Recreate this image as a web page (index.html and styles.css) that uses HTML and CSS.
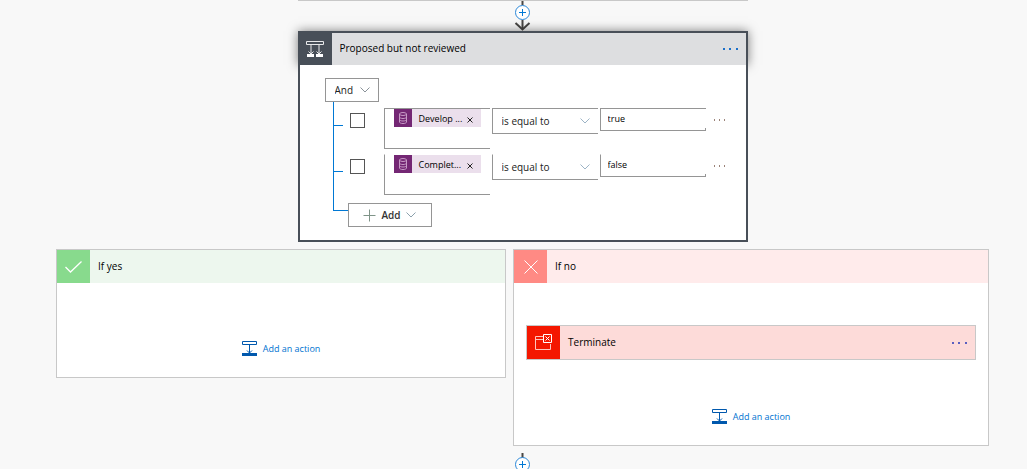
FILE: index.html
```html
<!DOCTYPE html>
<html lang="en">
<head>
  <meta charset="UTF-8" />
  <meta name="viewport" content="width=device-width, initial-scale=1.0"/>
  <title>Flow designer</title>
  <link rel="stylesheet" href="styles.css">
</head>
<body>
  <main class="flow">
    <div class="prev-step"></div>
    <svg class="connector" width="17" height="30" viewBox="0 0 17 30" fill="none">
      <path d="M8.5 0v4M8.5 19v9" stroke="#484644" stroke-width="2"/>
      <path d="M1.5 22l7 6.5 7-6.5" stroke="#484644" stroke-width="2"/>
      <circle cx="8.5" cy="11.5" r="7" fill="#fff" stroke="#2b88d8"/>
      <path d="M5 11.5h7M8.5 8v7" stroke="#0078d4"/>
    </svg>

    <section class="condition">
      <header class="condition-header">
        <span class="condition-icon">
          <svg width="18" height="18" viewBox="0 0 18 18" fill="none" stroke="#e8e9ea">
            <path d="M.5 1.5h17v3H.5zM5 5v9M13 5v9M2.500 11.500L5 14l2.500-2.500M10.500 11.500L13 14l2.500-2.500"/>
            <path d="M1 15.500h7M10 15.500h7" stroke="#fff" stroke-width="3"/>
          </svg>
        </span>
        <h2 class="title">Proposed but not reviewed</h2>
        <button class="menu" aria-label="Condition menu">
          <svg width="15" height="2" viewBox="0 0 15 2" fill="#1a6fc9"><path d="M0 0h2v2H0zM6 0h2v2H6zM13 0h2v2h-2z"/></svg>
        </button>
      </header>
      <div class="condition-body">
        <div class="dropdown group-op">
          <select aria-label="Group operator"><option>And</option><option>Or</option></select>
          <svg class="chevron" width="10" height="6" viewBox="0 0 10 6" fill="none" stroke="#8a9299"><path d="M.5.5L5 5 9.500.5"/></svg>
        </div>
        <div class="tree">
          <div class="row">
            <span class="tick"></span>
            <input type="checkbox" class="check" aria-label="Select first row">
            <div class="operand">
              <span class="token">
                <svg class="token-icon" width="18" height="18" viewBox="0 0 18 18" fill="none" stroke="#c79ac6"><ellipse cx="9" cy="5" rx="3.500" ry="1.500"/><path d="M5.500 5v8c0 2 7 2 7 0V5M5.500 8c0 2 7 2 7 0M5.500 10.500c0 2 7 2 7 0"/></svg>
                <span class="token-text">Develop ...</span>
                <button class="remove" aria-label="Remove Develop"><svg width="6" height="6" viewBox="0 0 6 6" stroke="#222"><path d="M.5.5l5 5M5.500.5l-5 5"/></svg></button>
              </span>
            </div>
            <div class="dropdown operator">
              <select aria-label="First comparison"><option>is equal to</option></select>
              <svg class="chevron" width="10" height="6" viewBox="0 0 10 6" fill="none" stroke="#9db4c6"><path d="M.5.5L5 5 9.500.5"/></svg>
            </div>
            <input class="value" type="text" value="true" aria-label="First value">
            <button class="menu row-menu" aria-label="First row menu">
              <svg width="12" height="2" viewBox="0 0 12 2" fill="#9b8278"><path d="M0 0h1v2H0zM5 0h1v2H5zM10 0h1v2h-1z"/></svg>
            </button>
          </div>
          <div class="row">
            <span class="tick"></span>
            <input type="checkbox" class="check" aria-label="Select second row">
            <div class="operand">
              <span class="token">
                <svg class="token-icon" width="18" height="18" viewBox="0 0 18 18" fill="none" stroke="#c79ac6"><ellipse cx="9" cy="5" rx="3.500" ry="1.500"/><path d="M5.500 5v8c0 2 7 2 7 0V5M5.500 8c0 2 7 2 7 0M5.500 10.500c0 2 7 2 7 0"/></svg>
                <span class="token-text">Complet...</span>
                <button class="remove" aria-label="Remove Complete"><svg width="6" height="6" viewBox="0 0 6 6" stroke="#222"><path d="M.5.5l5 5M5.500.5l-5 5"/></svg></button>
              </span>
            </div>
            <div class="dropdown operator">
              <select aria-label="Second comparison"><option>is equal to</option></select>
              <svg class="chevron" width="10" height="6" viewBox="0 0 10 6" fill="none" stroke="#9db4c6"><path d="M.5.5L5 5 9.500.5"/></svg>
            </div>
            <input class="value" type="text" value="false" aria-label="Second value">
            <button class="menu row-menu" aria-label="Second row menu">
              <svg width="12" height="2" viewBox="0 0 12 2" fill="#9b8278"><path d="M0 0h1v2H0zM5 0h1v2H5zM10 0h1v2h-1z"/></svg>
            </button>
          </div>
        </div>
        <div class="tree-end">
          <span class="elbow"></span>
          <button class="add">
            <svg width="13" height="13" viewBox="0 0 13 13" stroke="#7f9488"><path d="M.5 6.500h12M6.500.5v12"/></svg>
            Add
            <svg width="10" height="6" viewBox="0 0 10 6" fill="none" stroke="#8ba0ac"><path d="M.5.5L5 5 9.500.5"/></svg>
          </button>
        </div>
      </div>
    </section>

    <div class="branches">
      <section class="branch yes">
        <header class="branch-header">
          <span class="branch-icon">
            <svg width="17" height="12" viewBox="0 0 17 12" fill="none" stroke="#fff" stroke-width="1.300"><path d="M.5 6l5 5L16.500.5"/></svg>
          </span>
          <h2 class="title">If yes</h2>
        </header>
        <div class="branch-body">
          <button class="add-action">
            <svg width="15" height="15" viewBox="0 0 15 15" fill="none" stroke="#0058ad"><path d="M.5.5h14v3H.5zM7.500 4v8M5 9.500L7.500 12 10 9.500"/><path d="M0 13.500h15" stroke-width="3"/></svg>
            Add an action
          </button>
        </div>
      </section>

      <section class="branch no">
        <header class="branch-header">
          <span class="branch-icon">
            <svg width="14" height="14" viewBox="0 0 14 14" stroke="#fff"><path d="M.5.5l13 13M13.500.5l-13 13"/></svg>
          </span>
          <h2 class="title">If no</h2>
        </header>
        <div class="branch-body">
          <div class="action">
            <span class="action-icon">
              <svg width="18" height="17" viewBox="0 0 18 17" fill="none" stroke="#ffc4bc"><path d="M8 2.500H.5v13h15V10M.5 5.500H8"/><path d="M8.500.5h8v8h-8zM10.500 2.500l4 4M14.500 2.500l-4 4" stroke="#fff"/></svg>
            </span>
            <h3 class="title">Terminate</h3>
            <button class="menu" aria-label="Terminate menu">
              <svg width="15" height="2" viewBox="0 0 15 2" fill="#5a5fc0"><path d="M0 0h2v2H0zM6 0h2v2H6zM13 0h2v2h-2z"/></svg>
            </button>
          </div>
          <button class="add-action">
            <svg width="15" height="15" viewBox="0 0 15 15" fill="none" stroke="#0058ad"><path d="M.5.5h14v3H.5zM7.500 4v8M5 9.500L7.500 12 10 9.500"/><path d="M0 13.500h15" stroke-width="3"/></svg>
            Add an action
          </button>
        </div>
      </section>
    </div>

    <svg class="connector next" width="17" height="16" viewBox="0 0 17 16" fill="none">
      <path d="M8.5 0v5" stroke="#484644" stroke-width="2"/>
      <circle cx="8.5" cy="11.5" r="7" fill="#fff" stroke="#2b88d8"/>
      <path d="M5 11.5h7M8.5 8v7" stroke="#0078d4"/>
    </svg>
  </main>
</body>
</html>
```
FILE: styles.css
```css
* {
  box-sizing: border-box;
}
body {
  margin: 0;
  background: #f8f8f8;
  color: #111;
  font-family: 'Open Sans', 'Noto Sans', sans-serif;
  font-size: 10px;
}
button, input, select {
  font-family: inherit;
  font-size: inherit;
  color: inherit;
  margin: 0;
  padding: 0;
  border: none;
  background: none;
  border-radius: 0;
}
button {
  cursor: pointer;
}
svg {
  display: block;
  flex: none;
}
.flow {
  display: flex;
  flex-direction: column;
  align-items: center;
  padding: 0 38px 0 56px;
}
.prev-step {
  width: 450px;
  border-top: 1px solid #c8c8c8;
}
.title {
  flex: 1;
  margin: 0;
  padding: 0 0 2px 8px;
  color: #000;
  font-size: 10px;
  font-weight: normal;
}
.menu {
  display: flex;
  align-items: center;
  height: 20px;
  padding: 0 8px;
}

/* condition card */
.condition {
  width: 450px;
}
.condition-header {
  display: flex;
  align-items: center;
  height: 34px;
  border: 2px solid #484f58;
  border-bottom: none;
  background: #dddee0;
  box-shadow: 0 0 10px rgba(0, 0, 0, 0.5);
}
.condition-icon {
  display: flex;
  justify-content: center;
  align-items: center;
  width: 32px;
  height: 32px;
  padding-right: 2px;
  background: #484f58;
}
.condition-body {
  position: relative;
  padding: 13px 10px 13px 25px;
  border: 2px solid #484f58;
  border-top: none;
  background: #fff;
}
.dropdown {
  display: grid;
  grid-template-columns: 1fr auto;
  align-items: center;
  border: 1px solid #959595;
}
.dropdown select {
  grid-area: 1 / 1 / 2 / 3;
  height: 22px;
  padding-left: 9px;
  appearance: none;
  outline: none;
  color: #222;
}
.chevron {
  grid-area: 1 / 2;
  margin-right: 8px;
  pointer-events: none;
}
.group-op {
  width: 54px;
  height: 24px;
}
.tree {
  margin-left: 8px;
  padding-top: 6px;
  border-left: 1px solid #0078d4;
}
.row {
  display: flex;
  align-items: flex-start;
  height: 46px;
}
.row > * {
  flex: none;
}
.tick {
  width: 9px;
  margin-top: 17px;
  border-top: 1px solid #0078d4;
}
.check {
  width: 15px;
  height: 15px;
  margin: 5px 19px 0 7px;
  appearance: none;
  border: 1px solid #555;
}
.operand {
  width: 106px;
  height: 41px;
  margin-right: 2px;
  padding-left: 9px;
  border: 1px solid #959595;
  border-right: none;
}
.token {
  display: flex;
  align-items: center;
  width: 87px;
  height: 18px;
  background: #ebdfec;
  color: #000;
  font-size: 9px;
}
.token-icon {
  background: #742774;
}
.token-text {
  flex: 1;
  padding-left: 7px;
  white-space: nowrap;
}
.remove {
  padding: 3px 8px 0 0;
}
.operator {
  width: 106px;
  height: 26px;
  margin-right: 2px;
  border-right: none;
}
.value {
  width: 106px;
  height: 23px;
  padding: 0 7px 2px;
  border: 1px solid #959595;
  border-right: none;
  background: linear-gradient(#959595, #959595) right bottom / 1px 2px no-repeat;
  color: #000;
  font-size: 9px;
  outline: none;
}
.row + .row .operand,
.row + .row .operator,
.row + .row .value {
  border-top-color: #fff;
}
.row-menu {
  height: 24px;
}
.tree-end {
  display: flex;
  margin-left: 8px;
}
.elbow {
  width: 15px;
  height: 11px;
  border-left: 1px solid #0078d4;
  border-bottom: 1px solid #0078d4;
}
.add {
  display: flex;
  justify-content: center;
  align-items: center;
  gap: 5px;
  width: 84px;
  height: 24px;
  margin-top: 3px;
  border: 1px solid #959595;
  color: #333;
  font-weight: 600;
}

/* branches */
.branches {
  display: flex;
  align-items: flex-start;
  gap: 7px;
  width: 100%;
  margin-top: 7px;
}
.branch {
  border: 1px solid #c8c8c8;
  background: #fff;
}
.yes {
  flex: 450;
}
.no {
  flex: 476;
}
.branch-header, .action {
  display: flex;
  align-items: center;
}
.branch-icon, .action-icon {
  display: flex;
  justify-content: center;
  align-items: center;
  width: 33px;
  height: 33px;
}
.yes .branch-header {
  background: #edf7ee;
}
.yes .branch-icon {
  background: #88da8d;
}
.no .branch-header {
  background: #ffebeb;
}
.no .branch-icon {
  background: #ff8a84;
}
.branch-body {
  display: flex;
  flex-direction: column;
  align-items: center;
  padding: 42px 12px 21px;
}
.action {
  width: 100%;
  margin-bottom: 33px;
  border: 1px solid #c8c8c8;
  background: #fddbd9;
}
.action-icon {
  background: #f41700;
}
.add-action {
  display: flex;
  align-items: center;
  gap: 6px;
  height: 15px;
  margin-top: 16px;
  color: #0072d0;
  font-size: 9px;
}
.next {
  margin-top: 7px;
}
```
